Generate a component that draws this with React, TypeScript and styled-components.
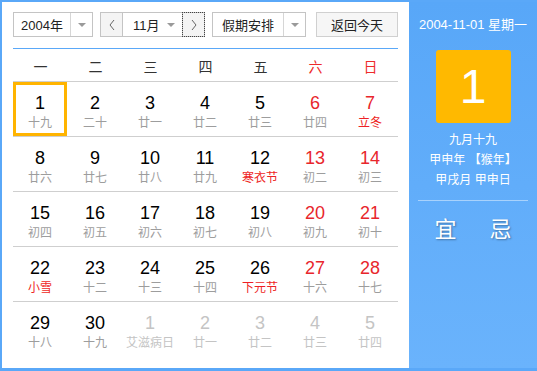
import React from "react";
import styled, { createGlobalStyle } from "styled-components";

const Global = createGlobalStyle`
  html, body { margin: 0; padding: 0; background: #fff; }
  body { font-family: "Liberation Sans", "Noto Sans CJK SC", sans-serif; }
`;

const Frame = styled.div`
  width: 537px;
  height: 371px;
  box-sizing: border-box;
  display: flex;
  border-top: 2px solid #5aa8f8;
  border-left: 2px solid #5aa8f8;
  border-bottom: 3px solid #5aa8f8;
  background: #5aa8f8;
`;

const Main = styled.div`
  width: 407px;
  background: #fff;
  box-sizing: border-box;
  padding: 10px 11px 0 11px;
  display: flex;
  flex-direction: column;
`;

const Toolbar = styled.div`
  display: flex;
  align-items: center;
  height: 25px;
  padding-bottom: 11px;
  border-bottom: 1px solid #5aa8f8;
`;

const Select = styled.div<{ $w: number; $gap?: number }>`
  width: ${(p) => p.$w}px;
  height: 25px;
  box-sizing: border-box;
  border: 1px solid #c4c4c4;
  display: flex;
  align-items: stretch;
  margin-right: ${(p) => p.$gap ?? 0}px;
  background: #fff;
  font-size: 13px;
  color: #222;
`;

const SelectText = styled.div<{ $w: number }>`
  width: ${(p) => p.$w}px;
  display: flex;
  align-items: center;
  justify-content: center;
  border-right: 1px solid #d6d6d6;
`;

const Caret = styled.div`
  flex: 1;
  display: flex;
  align-items: center;
  justify-content: center;
  &::after {
    content: "";
    border-left: 4px solid transparent;
    border-right: 4px solid transparent;
    border-top: 4px solid #9a9a9a;
  }
`;

const MonthGroup = styled.div`
  display: flex;
  height: 25px;
  margin-right: 7px;
`;

const NavBtn = styled.div<{ $focus?: boolean }>`
  width: 23px;
  height: 25px;
  box-sizing: border-box;
  border: 1px solid #c4c4c4;
  background: #f4f4f4;
  display: flex;
  align-items: center;
  justify-content: center;
  outline: ${(p) => (p.$focus ? "1px dotted #444" : "none")};
  outline-offset: -1px;
`;

const MonthSel = styled.div`
  width: 59px;
  height: 25px;
  box-sizing: border-box;
  border-top: 1px solid #c4c4c4;
  border-bottom: 1px solid #c4c4c4;
  display: flex;
  align-items: center;
  font-size: 13px;
  color: #222;
  padding-left: 10px;
  gap: 7px;
  &::after {
    content: "";
    border-left: 4px solid transparent;
    border-right: 4px solid transparent;
    border-top: 4px solid #9a9a9a;
  }
`;

const TodayBtn = styled.div`
  width: 82px;
  height: 25px;
  box-sizing: border-box;
  margin-left: auto;
  border: 1px solid #d0d0d0;
  background: #f6f6f6;
  display: flex;
  align-items: center;
  justify-content: center;
  font-size: 13px;
  color: #222;
`;

const WeekHead = styled.div`
  display: grid;
  grid-template-columns: repeat(7, 55px);
  height: 32px;
  border-bottom: 1px solid #cfcfcf;
`;

const WeekName = styled.div<{ $red?: boolean }>`
  display: flex;
  align-items: center;
  justify-content: center;
  font-size: 14px;
  color: ${(p) => (p.$red ? "#ee2b2b" : "#333")};
  padding-top: 1px;
`;

const Row = styled.div<{ $last?: boolean }>`
  display: grid;
  grid-template-columns: repeat(7, 55px);
  height: 54px;
  border-bottom: ${(p) => (p.$last ? "none" : "1px solid #cfcfcf")};
`;

const Cell = styled.div<{ $sel?: boolean }>`
  width: 54px;
  height: 54px;
  box-sizing: border-box;
  border: 3px solid ${(p) => (p.$sel ? "#ffb400" : "transparent")};
  display: flex;
  flex-direction: column;
  align-items: center;
  padding-top: 8px;
`;

const Num = styled.div<{ $c: string }>`
  font-size: 18px;
  line-height: 20px;
  height: 20px;
  color: ${(p) => p.$c};
`;

const Lunar = styled.div<{ $c: string }>`
  font-size: 12px;
  line-height: 16px;
  margin-top: 2px;
  color: ${(p) => p.$c};
  white-space: nowrap;
`;

const Side = styled.div`
  flex: 1;
  background: linear-gradient(#58a7f8, #6ab3fc);
  display: flex;
  flex-direction: column;
  align-items: center;
  color: #fff;
`;

const SideDate = styled.div`
  margin-top: 15px;
  font-size: 13px;
  line-height: 16px;
`;

const BigDay = styled.div`
  margin-top: 17px;
  width: 75px;
  height: 73px;
  border-radius: 3px;
  background: #ffb900;
  display: flex;
  align-items: center;
  justify-content: center;
  font-size: 48px;
  font-family: "Liberation Sans", sans-serif;
  color: #fff;
`;

const SideLine = styled.div<{ $mt: number }>`
  margin-top: ${(p) => p.$mt}px;
  font-size: 12px;
  line-height: 16px;
  white-space: pre;
`;

const Divider = styled.div`
  margin-top: 12px;
  width: 110px;
  height: 1px;
  background: rgba(255, 255, 255, 0.45);
`;

const YiJi = styled.div`
  margin-top: 16px;
  display: flex;
  gap: 33px;
  font-size: 22px;
  line-height: 26px;
  text-shadow: 1px 1px 2px rgba(0, 0, 0, 0.35);
`;

const Chevron = ({ dir }: { dir: "l" | "r" }) => (
  <svg width="8" height="12" viewBox="0 0 8 12">
    <polyline
      points={dir === "l" ? "6,1 2,6 6,11" : "2,1 6,6 2,11"}
      fill="none"
      stroke="#666"
      strokeWidth="1"
    />
  </svg>
);

type D = { n: number; l: string; numRed?: boolean; lunRed?: boolean; other?: boolean };

const rows: D[][] = [
  [
    { n: 1, l: "十九" }, { n: 2, l: "二十" }, { n: 3, l: "廿一" }, { n: 4, l: "廿二" },
    { n: 5, l: "廿三" }, { n: 6, l: "廿四", numRed: true }, { n: 7, l: "立冬", numRed: true, lunRed: true },
  ],
  [
    { n: 8, l: "廿六" }, { n: 9, l: "廿七" }, { n: 10, l: "廿八" }, { n: 11, l: "廿九" },
    { n: 12, l: "寒衣节", lunRed: true }, { n: 13, l: "初二", numRed: true }, { n: 14, l: "初三", numRed: true },
  ],
  [
    { n: 15, l: "初四" }, { n: 16, l: "初五" }, { n: 17, l: "初六" }, { n: 18, l: "初七" },
    { n: 19, l: "初八" }, { n: 20, l: "初九", numRed: true }, { n: 21, l: "初十", numRed: true },
  ],
  [
    { n: 22, l: "小雪", lunRed: true }, { n: 23, l: "十二" }, { n: 24, l: "十三" }, { n: 25, l: "十四" },
    { n: 26, l: "下元节", lunRed: true }, { n: 27, l: "十六", numRed: true }, { n: 28, l: "十七", numRed: true },
  ],
  [
    { n: 29, l: "十八" }, { n: 30, l: "十九" }, { n: 1, l: "艾滋病日", other: true }, { n: 2, l: "廿一", other: true },
    { n: 3, l: "廿二", other: true }, { n: 4, l: "廿三", other: true }, { n: 5, l: "廿四", other: true },
  ],
];

const weekNames = ["一", "二", "三", "四", "五", "六", "日"];

export default function App() {
  return (
    <>
      <Global />
      <Frame>
        <Main>
          <Toolbar>
            <Select $w={80} $gap={7}>
              <SelectText $w={56}>2004年</SelectText>
              <Caret />
            </Select>
            <MonthGroup>
              <NavBtn><Chevron dir="l" /></NavBtn>
              <MonthSel>11月</MonthSel>
              <NavBtn $focus><Chevron dir="r" /></NavBtn>
            </MonthGroup>
            <Select $w={94}>
              <SelectText $w={70}>假期安排</SelectText>
              <Caret />
            </Select>
            <TodayBtn>返回今天</TodayBtn>
          </Toolbar>
          <WeekHead>
            {weekNames.map((w, i) => (
              <WeekName key={w} $red={i >= 5}>{w}</WeekName>
            ))}
          </WeekHead>
          {rows.map((r, ri) => (
            <Row key={ri} $last={ri === rows.length - 1}>
              {r.map((d, ci) => (
                <Cell key={ci} $sel={ri === 0 && ci === 0}>
                  <Num $c={d.other ? "#c4c4c4" : d.numRed ? "#e8262c" : "#000"}>{d.n}</Num>
                  <Lunar $c={d.other ? "#c4c4c4" : d.lunRed ? "#ee1f25" : "#9d9d9d"}>{d.l}</Lunar>
                </Cell>
              ))}
            </Row>
          ))}
        </Main>
        <Side>
          <SideDate>2004-11-01 星期一</SideDate>
          <BigDay>1</BigDay>
          <SideLine $mt={9}>九月十九</SideLine>
          <SideLine $mt={4}>甲申年 【猴年】</SideLine>
          <SideLine $mt={4}>甲戌月 甲申日</SideLine>
          <Divider />
          <YiJi>
            <span>宜</span>
            <span>忌</span>
          </YiJi>
        </Side>
      </Frame>
    </>
  );
}
